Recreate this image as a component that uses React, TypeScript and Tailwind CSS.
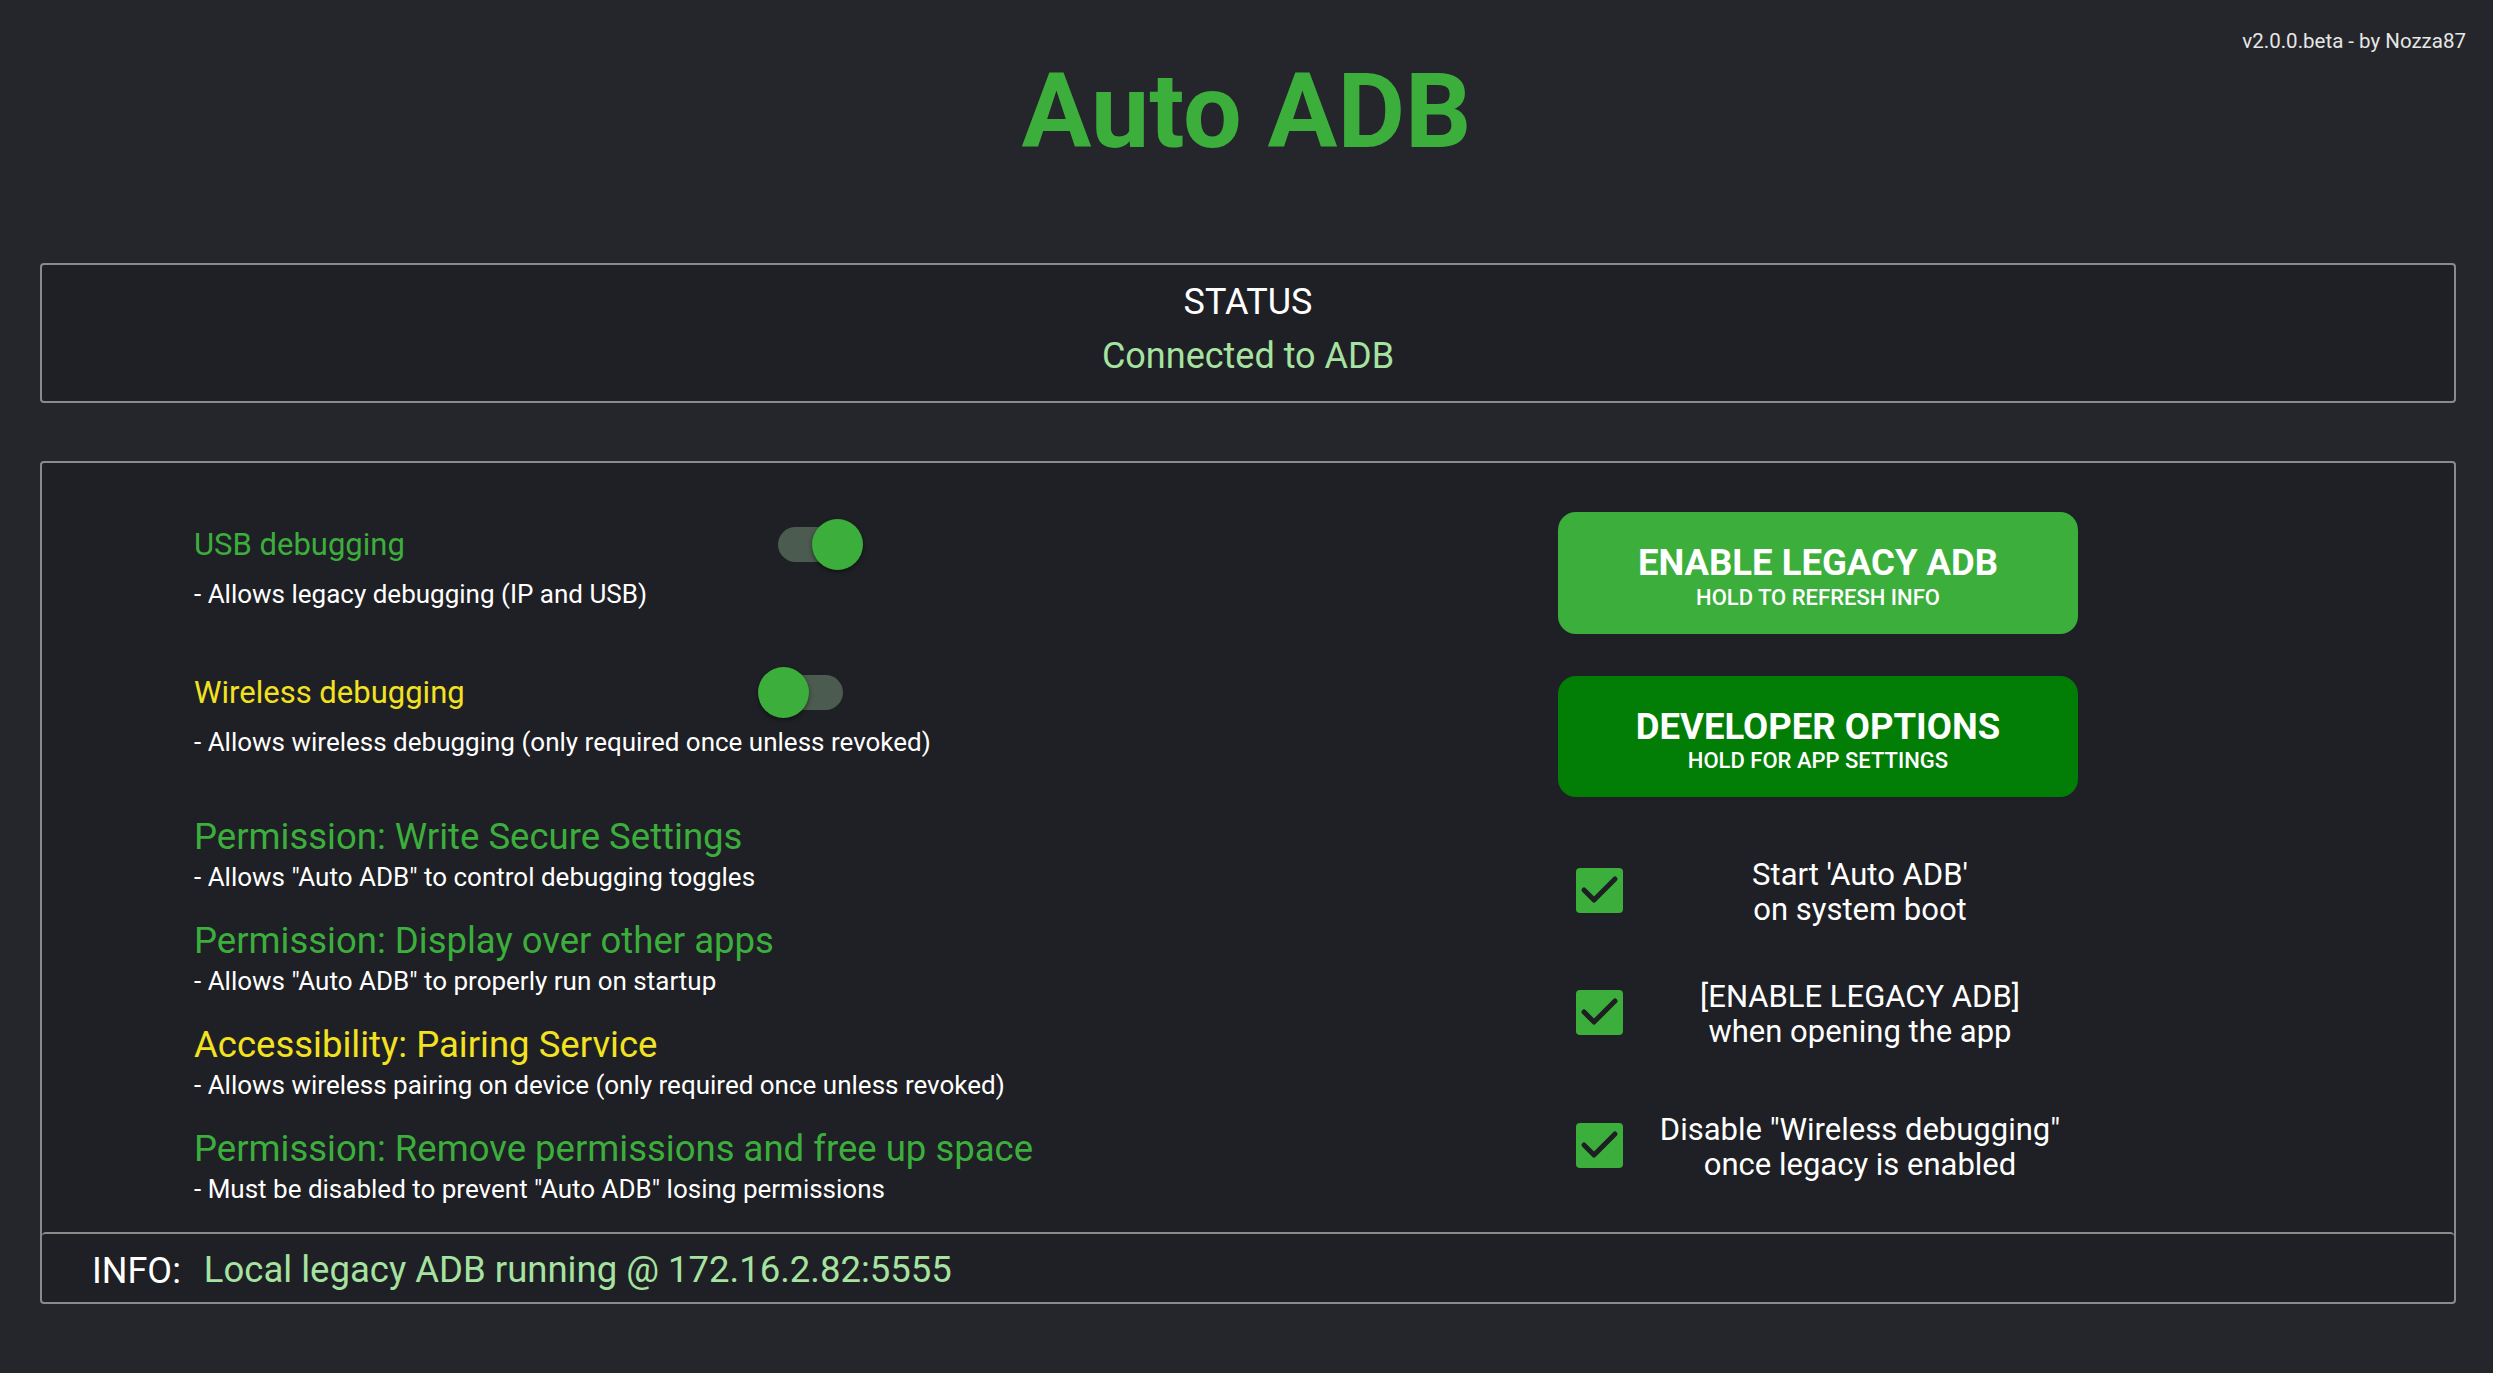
import React from "react";

const font = { fontFamily: "Roboto, 'Noto Sans', Arial, sans-serif" };

function Toggle({ on }: { on: boolean }) {
  return (
    <div className="relative w-[85px] h-[51px] shrink-0">
      <div
        className={
          on
            ? "absolute left-0 top-[8px] w-[72px] h-[35px] rounded-full bg-[#4b5b4f]"
            : "absolute right-0 top-[8px] w-[72px] h-[35px] rounded-full bg-[#4b5b4f]"
        }
      />
      <div
        className={
          on
            ? "absolute right-0 top-0 w-[51px] h-[51px] rounded-full bg-[#3cae3c] shadow-[0_2px_4px_rgba(0,0,0,0.45)]"
            : "absolute left-0 top-0 w-[51px] h-[51px] rounded-full bg-[#3cae3c] shadow-[0_2px_4px_rgba(0,0,0,0.45)]"
        }
      />
    </div>
  );
}

function Check() {
  return (
    <div className="w-[47px] h-[45px] rounded-[4px] bg-[#3cae3c] shrink-0 flex items-center justify-center">
      <svg width="47" height="45" viewBox="0 0 47 45">
        <polyline
          points="8,22 18,32 39,11"
          fill="none"
          stroke="#1d1f23"
          strokeWidth="5"
          strokeLinecap="round"
          strokeLinejoin="round"
        />
      </svg>
    </div>
  );
}

function Perm({ title, desc, color, first }: { title: string; desc: string; color: string; first?: boolean }) {
  return (
    <div className={first ? "mt-[57px]" : "mt-[26px]"}>
      <div className={`text-[36.5px] leading-[42px] ${color}`}>{title}</div>
      <div className="mt-[2px] text-[26px] leading-[34px] text-white">{desc}</div>
    </div>
  );
}

function CheckRow({ l1, l2, mt }: { l1: string; l2: string; mt: string }) {
  return (
    <div className={`flex items-center pl-[18px] ${mt}`}>
      <Check />
      <div className="w-[474px] pt-[3px] text-center text-[31px] leading-[35px] text-white">
        <div>{l1}</div>
        <div>{l2}</div>
      </div>
    </div>
  );
}

export default function App() {
  return (
    <div className="w-full h-[1373px] bg-[#25262b] overflow-hidden" style={font}>
      <div className="pt-[32px] flex justify-end pr-[27px]">
        <div className="text-[20.5px] leading-[19px] text-[#e6e6e6]">v2.0.0.beta - by Nozza87</div>
      </div>
      <div className="mt-[9px] text-center text-[104px] leading-[104px] font-bold text-[#3cae3c]">Auto ADB</div>

      <div className="ml-[40px] w-[2416px] mt-[99px] border-2 border-[#8a8a8a] rounded-[4px] bg-[#1f2025] pt-[17px] pb-[25px] text-center">
        <div className="text-[36px] leading-[40px] text-white">STATUS</div>
        <div className="mt-[14px] text-[36px] leading-[40px] text-[#a6e3a1]">Connected to ADB</div>
      </div>

      <div className="ml-[40px] w-[2416px] mt-[58px] border-2 border-[#8a8a8a] rounded-[4px] bg-[#1f2025]">
        <div className="h-[769px] flex">
          <div className="w-[1516px] pl-[152px] pt-[56px]">
            <div className="flex items-center">
              <div className="w-[584px] text-[31px] leading-[40px] text-[#3cae3c]">USB debugging</div>
              <Toggle on />
            </div>
            <div className="mt-[7px] text-[26px] leading-[34px] text-white">- Allows legacy debugging (IP and USB)</div>

            <div className="mt-[56px] flex items-center">
              <div className="w-[564px] text-[31px] leading-[40px] text-[#f2e21f]">Wireless debugging</div>
              <Toggle on={false} />
            </div>
            <div className="mt-[7px] text-[26px] leading-[34px] text-white">
              - Allows wireless debugging (only required once unless revoked)
            </div>

            <Perm
              first
              title="Permission: Write Secure Settings"
              desc={'- Allows "Auto ADB" to control debugging toggles'}
              color="text-[#3cae3c]"
            />
            <Perm
              title="Permission: Display over other apps"
              desc={'- Allows "Auto ADB" to properly run on startup'}
              color="text-[#3cae3c]"
            />
            <Perm
              title="Accessibility: Pairing Service"
              desc="- Allows wireless pairing on device (only required once unless revoked)"
              color="text-[#f2e21f]"
            />
            <Perm
              title="Permission: Remove permissions and free up space"
              desc={'- Must be disabled to prevent "Auto ADB" losing permissions'}
              color="text-[#3cae3c]"
            />
          </div>

          <div className="w-[560px] pt-[49px]">
            <div className="w-[520px] h-[122px] rounded-[18px] bg-[#3cae3c] flex flex-col items-center justify-center text-white pt-[7px]">
              <div className="text-[36.5px] leading-[38px] font-bold">ENABLE LEGACY ADB</div>
              <div className="mt-[4px] text-[22px] leading-[24px] font-medium">HOLD TO REFRESH INFO</div>
            </div>
            <div className="mt-[42px] w-[520px] h-[121px] rounded-[18px] bg-[#027d05] flex flex-col items-center justify-center text-white pt-[7px]">
              <div className="text-[36.5px] leading-[38px] font-bold">DEVELOPER OPTIONS</div>
              <div className="mt-[3px] text-[22px] leading-[24px] font-medium">HOLD FOR APP SETTINGS</div>
            </div>

            <CheckRow l1="Start 'Auto ADB'" l2="on system boot" mt="mt-[57px]" />
            <CheckRow l1="[ENABLE LEGACY ADB]" l2="when opening the app" mt="mt-[49px]" />
            <CheckRow l1={'Disable "Wireless debugging"'} l2="once legacy is enabled" mt="mt-[60px]" />
          </div>
        </div>

        <div className="h-[70px] border-t-2 border-[#8a8a8a] rounded-t-[4px] flex items-center pl-[50px] pt-[5px] text-[36px]">
          <span className="text-white">INFO:</span>
          <span className="ml-[23px] text-[36.5px] text-[#a6e3a1]">Local legacy ADB running @ 172.16.2.82:5555</span>
        </div>
      </div>
    </div>
  );
}
